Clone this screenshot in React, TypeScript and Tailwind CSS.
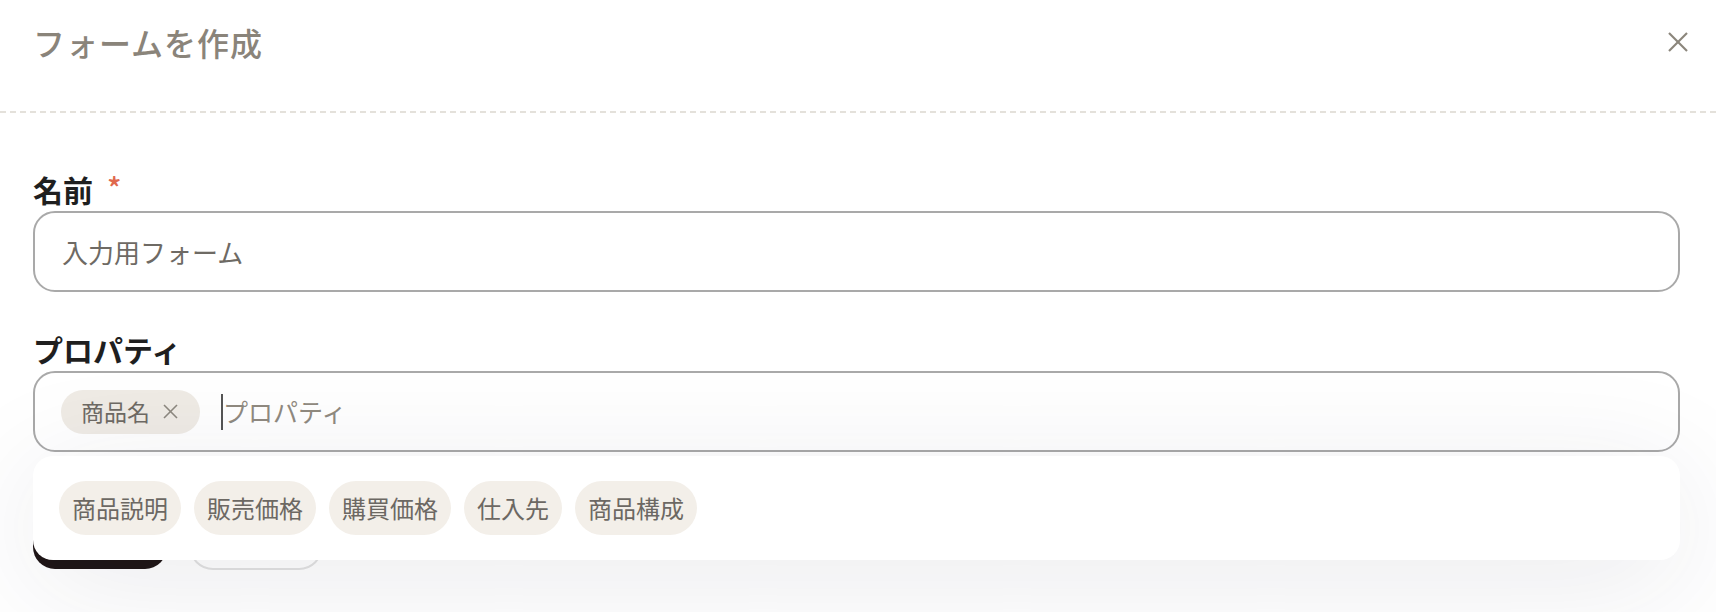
const FONT = "font-['Noto_Sans_CJK_JP','Noto_Sans',sans-serif]";

const OPTIONS = ["商品説明", "販売価格", "購買価格", "仕入先", "商品構成"];

function CloseIcon() {
  return (
    <svg width="22" height="22" viewBox="0 0 22 22" fill="none" stroke="#8b857b" strokeWidth="2.2" aria-hidden="true">
      <line x1="2" y1="2" x2="20" y2="20" />
      <line x1="20" y1="2" x2="2" y2="20" />
    </svg>
  );
}

function SelectedChip({ label }: { label: string }) {
  return (
    <span className="h-[44px] pl-[20px] pr-[21px] rounded-full bg-[#efebe5] flex items-center gap-[12px] flex-shrink-0">
      <span className="text-[23px] leading-none text-[#6e6a64]">{label}</span>
      <svg width="17" height="17" viewBox="0 0 17 17" fill="none" stroke="#8d887f" strokeWidth="1.6" aria-hidden="true">
        <line x1="2" y1="2" x2="15" y2="15" />
        <line x1="15" y1="2" x2="2" y2="15" />
      </svg>
    </span>
  );
}

export default function App() {
  return (
    <div className={`w-full h-[612px] bg-white overflow-hidden ${FONT}`}>
      <header className="h-[111px] pl-[33px] pr-[18px] pt-[22px] flex items-start justify-between">
        <h1 className="text-[32px] leading-[40px] font-medium text-[#8a847a] tracking-[1px]">フォームを作成</h1>
        <button type="button" className="h-[40px] w-[40px] flex items-center justify-center">
          <CloseIcon />
        </button>
      </header>
      <div className="h-[2px] bg-[repeating-linear-gradient(90deg,#e4e1db_0_6px,transparent_6px_10px)]" />

      <div className="pl-[33px] pr-[36px] pt-[58px] flex flex-col">
        <label className="text-[30px] leading-[37px] font-bold text-[#1f1f1f] flex items-start">
          名前
          <span className="ml-[14px] mt-[1px] text-[30px] leading-[30px] font-medium text-[#e0694d]">*</span>
        </label>
        <div className="mt-[3px] h-[81px] rounded-[22px] border-2 border-[#a9a9a9] pl-[27px] flex items-center">
          <span className="text-[26px] leading-none text-[#6e6a64]">入力用フォーム</span>
        </div>

        <label className="mt-[39px] text-[30px] leading-[37px] font-bold text-[#1f1f1f]">プロパティ</label>
        <div className="relative mt-[3px]">
          <div className="h-[81px] rounded-[22px] border-2 border-[#a9a9a9] pl-[26px] flex items-center gap-[21px]">
            <SelectedChip label="商品名" />
            <div className="flex items-center">
              <span className="w-[2px] h-[36px] bg-[#555]" />
              <span className="text-[25px] leading-none text-[#908a80]">プロパティ</span>
            </div>
          </div>

          <div className="absolute z-10 left-0 right-0 top-[85px] h-[104px] rounded-[20px] bg-white shadow-[0_20px_120px_rgba(40,40,70,0.10)] px-[26px] flex items-center gap-[13px]">
            {OPTIONS.map((o) => (
              <span
                key={o}
                className="h-[54px] px-[13px] rounded-full bg-[#f3efe9] flex items-center text-[24px] leading-none text-[#6c6863]"
              >
                {o}
              </span>
            ))}
          </div>
        </div>

        <div className="mt-[60px] flex items-center gap-[22px]">
          <button type="button" className="h-[56px] w-[134px] rounded-[22px] bg-[#1e1515] text-white text-[22px] font-bold">
            作成
          </button>
          <button type="button" className="h-[58px] w-[134px] rounded-[24px] border-2 border-[#e2e2e2] text-[#6e6a64] text-[22px]">
            キャンセル
          </button>
        </div>
      </div>
    </div>
  );
}
